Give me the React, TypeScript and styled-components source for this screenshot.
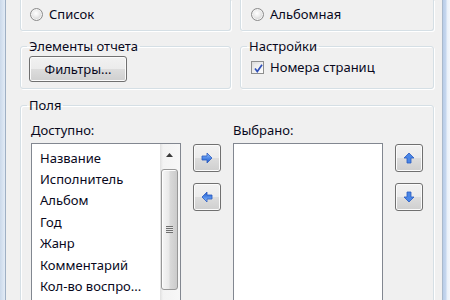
import React from 'react';
import styled, { createGlobalStyle } from 'styled-components';

const Global = createGlobalStyle`
  html, body { margin: 0; padding: 0; background: #f0f0f0; }
  body {
    width: 450px; height: 300px; overflow: hidden;
    font-family: "Noto Sans", "Open Sans", sans-serif;
    font-size: 13px; color: #08081c;
  }
  * { box-sizing: border-box; }
`;

const Window = styled.div`
  display: flex;
  width: 450px;
  height: 300px;
  overflow: hidden;
`;

const LeftFrame = styled.div`
  flex: none;
  width: 6px;
  background: linear-gradient(to right, #cbd9ea, #e2ebf6);
  border-right: 1px solid #9fb0c4;
`;

const RightFrame = styled.div`
  flex: none;
  width: 8px;
  background: linear-gradient(to right, #b9cde8 0, #c7d8ef 3px, #e9f0f9 4px, #f3f7fc 100%);
  border-left: 1px solid #a9b9cc;
`;

const Client = styled.div`
  flex: 1;
  background: #f0f0f0;
  display: flex;
  flex-direction: column;
  padding: 0 8px 0 14px;
`;

const Row = styled.div<{ $top: number; $single?: boolean }>`
  display: grid;
  grid-template-columns: ${(p) => (p.$single ? '414px' : '211px 194px')};
  column-gap: 9px;
  margin-top: ${(p) => p.$top}px;
`;

const CutBox = styled.div<{ $pad: number }>`
  height: 31px;
  border: 1px solid #d5dfe5;
  border-top: none;
  border-radius: 0 0 3px 3px;
  box-shadow: 1px 1px 0 #ffffff, inset 1px 0 0 #ffffff;
  padding: 6px 0 0 ${(p) => p.$pad}px;
  display: flex;
  align-items: flex-start;
`;

const Group = styled.fieldset<{ $h?: number }>`
  margin: 0;
  padding: 0;
  min-inline-size: 0;
  border: 1px solid #d5dfe5;
  border-radius: 3px;
  box-shadow: 1px 1px 0 #ffffff, inset 1px 1px 0 #ffffff;
  ${(p) => (p.$h ? `height: ${p.$h}px;` : '')}
`;

const Legend = styled.legend`
  margin-left: 6px;
  padding: 0 2px;
  line-height: 16px;
  font-size: 13px;
`;

const GroupBody = styled.div<{ $pad: number; $top: number }>`
  padding: ${(p) => p.$top}px 0 6px ${(p) => p.$pad}px;
`;

const Choice = styled.label<{ $top?: number }>`
  display: flex;
  align-items: center;
  gap: 6px;
  line-height: 17px;
  height: 17px;
  white-space: nowrap;
  margin-top: ${(p) => p.$top ?? 0}px;
`;

const Radio = styled.span`
  flex: none;
  width: 13px;
  height: 13px;
  border-radius: 50%;
  border: 1px solid #8b8b8b;
  background: radial-gradient(circle at 45% 40%, #ffffff 0, #eeeeee 35%, #d2d2d2 75%, #c6c6c6 100%);
  box-shadow: inset 0 0 0 1px #f4f4f4;
`;

const Check = styled.span`
  flex: none;
  width: 13px;
  height: 13px;
  border: 1px solid #8e8f8f;
  background: linear-gradient(135deg, #dcdcdc, #ffffff);
  padding: 2px;
  display: flex;
`;

const CheckInner = styled.span`
  flex: 1;
  background: linear-gradient(135deg, #e8e8e8, #fbfbfb);
  position: relative;
`;

const CheckMark = styled.svg`
  position: absolute;
  left: -2px;
  top: -2px;
  display: block;
`;

const PushButton = styled.button<{ $w: number; $h: number }>`
  width: ${(p) => p.$w}px;
  height: ${(p) => p.$h}px;
  margin: 0;
  padding: 0;
  border: 1px solid #707070;
  border-radius: 3px;
  background: linear-gradient(#f2f2f2 0%, #ebebeb 50%, #dddddd 50%, #cfcfcf 100%);
  box-shadow: inset 0 0 0 1px #fbfbfb;
  font-family: inherit;
  font-size: 13px;
  color: #08081c;
  display: flex;
  align-items: center;
  justify-content: center;
`;

const Fields = styled.div`
  display: flex;
  gap: 12px;
  align-items: flex-start;
`;

const ListColumn = styled.div`
  display: flex;
  flex-direction: column;
  width: 150px;
`;

const Caption = styled.div`
  line-height: 17px;
  margin-bottom: 4px;
  white-space: nowrap;
`;

const ListBox = styled.div`
  height: 170px;
  border: 1px solid #828790;
  background: #ffffff;
  display: flex;
`;

const Items = styled.ul`
  flex: 1;
  list-style: none;
  margin: 0;
  padding: 3.5px 0 0 8px;
  overflow: hidden;
`;

const Item = styled.li`
  line-height: 21.4px;
  white-space: nowrap;
`;

const ScrollBar = styled.div`
  flex: none;
  width: 20px;
  display: flex;
  flex-direction: column;
  background: linear-gradient(to right, #e6e6e6 0, #f3f3f3 2px, #f7f7f7 100%);
  border-left: 1px solid #e3e3e3;
  padding: 0 2px 0 0;
`;

const ScrollArrow = styled.div`
  height: 25px;
  display: flex;
  align-items: center;
  justify-content: center;
  padding-bottom: 3px;
`;

const Thumb = styled.div`
  height: 121px;
  border: 1px solid #979797;
  border-radius: 3px;
  background: linear-gradient(to right, #f6f6f6 0%, #e9e9e9 45%, #d9d9d9 55%, #cbcbcb 100%);
  box-shadow: inset 1px 1px 0 #fdfdfd;
  display: flex;
  align-items: center;
  justify-content: center;
`;

const Grip = styled.div`
  width: 7px;
  height: 7px;
  background: repeating-linear-gradient(#6f6f6f 0, #6f6f6f 1px, #e6e6e6 1px, #e6e6e6 2px);
`;

const ButtonColumn = styled.div`
  display: flex;
  flex-direction: column;
  gap: 11px;
  padding-top: 22px;
`;

type Dir = 'right' | 'left' | 'up' | 'down';

const rot: Record<Dir, number> = { right: 0, down: 90, left: 180, up: 270 };

function BlueArrow({ dir }: { dir: Dir }) {
  const id = `g-${dir}`;
  return (
    <svg width="12" height="12" viewBox="0 0 12 12">
      <defs>
        <linearGradient id={id} x1="0" y1="0" x2="0" y2="1">
          <stop offset="0" stopColor="#9cc4ff" />
          <stop offset="0.5" stopColor="#4f8ae8" />
          <stop offset="1" stopColor="#2458c8" />
        </linearGradient>
      </defs>
      <g transform={`rotate(${rot[dir]} 6 6)`}>
        <path
          d="M1 4 H6 V1 L11 6 L6 11 V8 H1 Z"
          fill={dir === 'up' || dir === 'down' ? '#4a86e6' : `url(#${id})`}
          stroke="#2a5bc0"
          strokeWidth="0.8"
          strokeLinejoin="round"
        />
      </g>
    </svg>
  );
}

const items = ['Название', 'Исполнитель', 'Альбом', 'Год', 'Жанр', 'Комментарий', 'Кол-во воспро...'];

export default function App() {
  return (
    <>
      <Global />
      <Window>
        <LeftFrame />
        <Client>
          <Row $top={0}>
            <CutBox $pad={9}>
              <Choice>
                <Radio />
                Список
              </Choice>
            </CutBox>
            <CutBox $pad={10}>
              <Choice>
                <Radio />
                Альбомная
              </Choice>
            </CutBox>
          </Row>
          <Row $top={7}>
            <Group>
              <Legend>Элементы отчета</Legend>
              <GroupBody $pad={8} $top={2}>
                <PushButton $w={98} $h={26}>Фильтры...</PushButton>
              </GroupBody>
            </Group>
            <Group>
              <Legend>Настройки</Legend>
              <GroupBody $pad={10} $top={2}>
                <Choice $top={3}>
                  <Check>
                    <CheckInner>
                      <CheckMark width="13" height="13" viewBox="0 0 13 13">
                        <path d="M3 6.5 L5.3 9.5 L10 2.8" fill="none" stroke="#3050b8" strokeWidth="1.7" />
                      </CheckMark>
                    </CheckInner>
                  </Check>
                  Номера страниц
                </Choice>
              </GroupBody>
            </Group>
          </Row>
          <Row $top={8} $single>
            <Group $h={220}>
              <Legend>Поля</Legend>
              <GroupBody $pad={10} $top={9}>
                <Fields>
                  <ListColumn>
                    <Caption>Доступно:</Caption>
                    <ListBox>
                      <Items>
                        {items.map((t) => (
                          <Item key={t}>{t}</Item>
                        ))}
                      </Items>
                      <ScrollBar>
                        <ScrollArrow>
                          <svg width="7" height="4" viewBox="0 0 7 4">
                            <path d="M0 4 L3.5 0 L7 4 Z" fill="#3a3a3a" />
                          </svg>
                        </ScrollArrow>
                        <Thumb>
                          <Grip />
                        </Thumb>
                      </ScrollBar>
                    </ListBox>
                  </ListColumn>
                  <ButtonColumn>
                    <PushButton $w={28} $h={28}><BlueArrow dir="right" /></PushButton>
                    <PushButton $w={28} $h={28}><BlueArrow dir="left" /></PushButton>
                  </ButtonColumn>
                  <ListColumn>
                    <Caption>Выбрано:</Caption>
                    <ListBox />
                  </ListColumn>
                  <ButtonColumn>
                    <PushButton $w={28} $h={28}><BlueArrow dir="up" /></PushButton>
                    <PushButton $w={28} $h={28}><BlueArrow dir="down" /></PushButton>
                  </ButtonColumn>
                </Fields>
              </GroupBody>
            </Group>
          </Row>
        </Client>
        <RightFrame />
      </Window>
    </>
  );
}
